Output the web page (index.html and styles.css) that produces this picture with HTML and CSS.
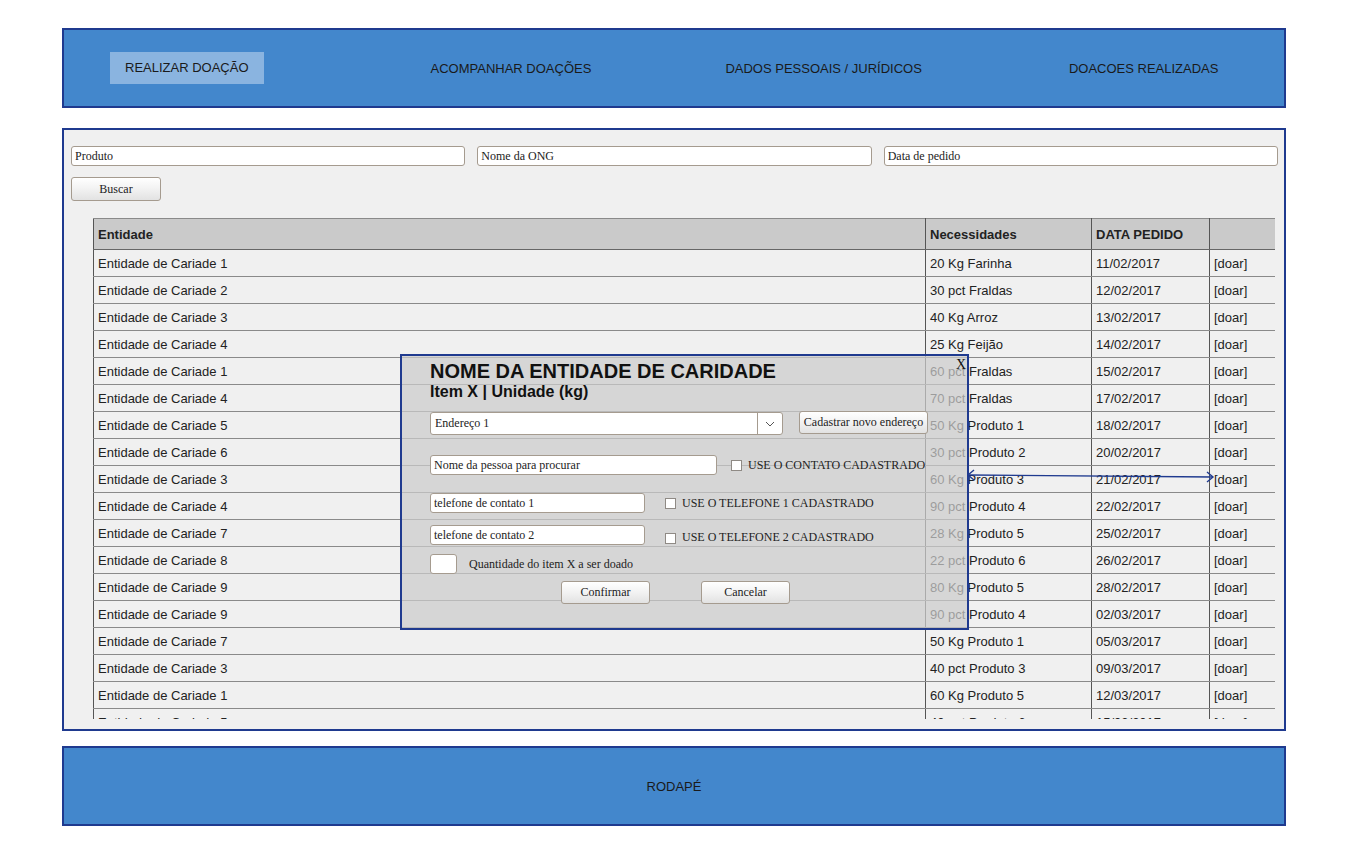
FILE: index.html
```html
<!DOCTYPE html>
<html lang="pt-BR">
<head>
<meta charset="utf-8">
<title>Realizar Doação</title>
<link rel="stylesheet" href="styles.css">
</head>
<body>
<header class="topbar">
  <nav class="nav">
    <a class="nav-item nav-active">REALIZAR DOAÇÃO</a>
    <a class="nav-item nav-2">ACOMPANHAR DOAÇÕES</a>
    <a class="nav-item nav-3">DADOS PESSOAIS / JURÍDICOS</a>
    <a class="nav-item nav-4">DOACOES REALIZADAS</a>
  </nav>
</header>

<main class="main">
  <div class="search">
    <input class="field" type="text" value="Produto">
    <input class="field" type="text" value="Nome da ONG">
    <input class="field" type="text" value="Data de pedido">
  </div>
  <button class="btn btn-buscar">Buscar</button>

  <div class="table-wrap">
    <table class="grid">
      <colgroup>
        <col class="c1"><col class="c2"><col class="c3"><col class="c4">
      </colgroup>
      <thead>
        <tr><th>Entidade</th><th>Necessidades</th><th>DATA PEDIDO</th><th></th></tr>
      </thead>
      <tbody>
        <tr><td>Entidade de Cariade 1</td><td>20 Kg Farinha</td><td>11/02/2017</td><td>[doar]</td></tr>
        <tr><td>Entidade de Cariade 2</td><td>30 pct Fraldas</td><td>12/02/2017</td><td>[doar]</td></tr>
        <tr><td>Entidade de Cariade 3</td><td>40 Kg Arroz</td><td>13/02/2017</td><td>[doar]</td></tr>
        <tr><td>Entidade de Cariade 4</td><td>25 Kg Feijão</td><td>14/02/2017</td><td>[doar]</td></tr>
        <tr><td>Entidade de Cariade 1</td><td>60 pct Fraldas</td><td>15/02/2017</td><td>[doar]</td></tr>
        <tr><td>Entidade de Cariade 4</td><td>70 pct Fraldas</td><td>17/02/2017</td><td>[doar]</td></tr>
        <tr><td>Entidade de Cariade 5</td><td>50 Kg Produto 1</td><td>18/02/2017</td><td>[doar]</td></tr>
        <tr><td>Entidade de Cariade 6</td><td>30 pct Produto 2</td><td>20/02/2017</td><td>[doar]</td></tr>
        <tr><td>Entidade de Cariade 3</td><td>60 Kg Produto 3</td><td>21/02/2017</td><td>[doar]</td></tr>
        <tr><td>Entidade de Cariade 4</td><td>90 pct Produto 4</td><td>22/02/2017</td><td>[doar]</td></tr>
        <tr><td>Entidade de Cariade 7</td><td>28 Kg Produto 5</td><td>25/02/2017</td><td>[doar]</td></tr>
        <tr><td>Entidade de Cariade 8</td><td>22 pct Produto 6</td><td>26/02/2017</td><td>[doar]</td></tr>
        <tr><td>Entidade de Cariade 9</td><td>80 Kg Produto 5</td><td>28/02/2017</td><td>[doar]</td></tr>
        <tr><td>Entidade de Cariade 9</td><td>90 pct Produto 4</td><td>02/03/2017</td><td>[doar]</td></tr>
        <tr><td>Entidade de Cariade 7</td><td>50 Kg Produto 1</td><td>05/03/2017</td><td>[doar]</td></tr>
        <tr><td>Entidade de Cariade 3</td><td>40 pct Produto 3</td><td>09/03/2017</td><td>[doar]</td></tr>
        <tr><td>Entidade de Cariade 1</td><td>60 Kg Produto 5</td><td>12/03/2017</td><td>[doar]</td></tr>
        <tr><td>Entidade de Cariade 5</td><td>40 pct Produto 6</td><td>15/03/2017</td><td>[doar]</td></tr>
      </tbody>
    </table>
  </div>

  <section class="modal">
    <span class="modal-close">X</span>
    <h1 class="modal-title">NOME DA ENTIDADE DE CARIDADE</h1>
    <h2 class="modal-sub">Item X | Unidade (kg)</h2>

    <div class="mrow row-address">
      <div class="select">
        <span class="select-text">Endereço 1</span>
        <span class="select-arrow">
          <svg width="10" height="6" viewBox="0 0 10 6"><path d="M1 1 L5 5 L9 1" fill="none" stroke="#555" stroke-width="1"/></svg>
        </span>
      </div>
      <button class="btn btn-new">Cadastrar novo endereço</button>
    </div>

    <div class="mrow row-contact">
      <input class="field f-contact" type="text" value="Nome da pessoa para procurar">
      <span class="check ck-contact"></span>
      <span class="mlabel">USE O CONTATO CADASTRADO</span>
    </div>

    <div class="mrow row-phone1">
      <input class="field f-phone" type="text" value="telefone de contato 1">
      <span class="check ck-phone"></span>
      <span class="mlabel">USE O TELEFONE 1 CADASTRADO</span>
    </div>

    <div class="mrow row-phone2">
      <input class="field f-phone" type="text" value="telefone de contato 2">
      <span class="check ck-phone"></span>
      <span class="mlabel">USE O TELEFONE 2 CADASTRADO</span>
    </div>

    <div class="mrow row-qty">
      <input class="field f-qty" type="text" value="">
      <span class="mlabel qty-label">Quantidade do item X a ser doado</span>
    </div>

    <div class="mrow row-buttons">
      <button class="btn btn-confirm">Confirmar</button>
      <button class="btn btn-cancel">Cancelar</button>
    </div>
  </section>

  <svg class="arrow" width="252" height="14" viewBox="0 0 252 14">
    <path d="M2 6 L247 8" fill="none" stroke="#1f3a8f" stroke-width="1.4"/>
    <path d="M8 1 L2 6 L8 11" fill="none" stroke="#1f3a8f" stroke-width="1.4"/>
    <path d="M241 3 L247 8 L241 13" fill="none" stroke="#1f3a8f" stroke-width="1.4"/>
  </svg>
</main>

<footer class="footer">RODAPÉ</footer>
</body>
</html>
```

FILE: styles.css
```css
* { box-sizing: border-box; }

html, body {
  margin: 0;
  padding: 0;
  background: #ffffff;
}

body {
  padding-top: 28px;
  font-family: "Liberation Sans", Arial, sans-serif;
  font-size: 13px;
  color: #222;
}

.topbar,
.main,
.footer {
  width: 1224px;
  margin-left: 62px;
  border: 2px solid #1f3a8f;
}

/* header */
.topbar {
  height: 80px;
  background: #4387cc;
  display: flex;
  align-items: center;
}

.nav {
  display: flex;
  align-items: center;
  padding-left: 46px;
}

.nav-item {
  display: block;
  padding: 9px 15px;
  font-size: 13px;
  line-height: 14px;
  color: #1a1a1a;
  text-decoration: none;
  white-space: nowrap;
}

.nav-active {
  background: #8ab4e0;
  height: 32px;
}

.nav-2 { margin-left: 152px; margin-top: 1px; }
.nav-3 { margin-left: 104px; margin-top: 1px; }
.nav-4 { margin-left: 117px; margin-top: 1px; }

/* main */
.main {
  position: relative;
  margin-top: 20px;
  height: 603px;
  background: #f0f0f0;
  padding: 16px 6px 10px 7px;
}

.search {
  display: grid;
  grid-template-columns: 1fr 1fr 1fr;
  column-gap: 12px;
}

.field {
  display: block;
  height: 20px;
  margin: 0;
  padding: 0 3px;
  border: 1px solid #a59b8f;
  border-radius: 3px;
  background: #fff;
  font-family: "Liberation Serif", "Times New Roman", serif;
  font-size: 12px;
  color: #222;
}

.btn {
  display: block;
  margin: 0;
  padding: 0;
  border: 1px solid #a59b8f;
  border-radius: 3px;
  background: linear-gradient(#ffffff, #f2f2f2 50%, #e2e2e2);
  font-family: "Liberation Serif", "Times New Roman", serif;
  font-size: 12px;
  color: #222;
}

.btn-buscar {
  margin-top: 11px;
  width: 90px;
  height: 24px;
}

.table-wrap {
  margin-top: 17px;
  margin-left: 22px;
  margin-right: 3px;
  height: 501px;
  overflow: hidden;
}

.grid {
  width: 100%;
  table-layout: fixed;
  border-collapse: collapse;
  font-size: 13px;
  color: #222;
}

.c1 { width: 832px; }
.c2 { width: 166px; }
.c3 { width: 118px; }
.c4 { width: 66px; }

.grid th,
.grid td {
  padding: 0 4px;
  text-align: left;
  border-left: 1px solid #555;
  border-right: 1px solid #555;
  border-top: 1px solid #8a8a8a;
  border-bottom: 1px solid #8a8a8a;
  white-space: nowrap;
  overflow: hidden;
}

.grid th {
  height: 31px;
  background: #cacaca;
  font-weight: bold;
  border-bottom: 1px solid #666;
}

.grid td {
  height: 27px;
}

/* modal */
.modal {
  position: absolute;
  left: 336px;
  top: 224px;
  width: 569px;
  height: 276px;
  border: 2px solid #1f3a8f;
  background: rgba(204, 204, 204, 0.72);
  padding: 4px 0 0 28px;
}

.modal-close {
  position: absolute;
  top: 2px;
  right: 1px;
  font-family: "Liberation Serif", "Times New Roman", serif;
  font-size: 14px;
  line-height: 14px;
  color: #111;
}

.modal-title {
  margin: 0;
  font-size: 20px;
  line-height: 23px;
  font-weight: bold;
  color: #111;
}

.modal-sub {
  margin: 0;
  font-size: 16px;
  line-height: 18px;
  font-weight: bold;
  color: #111;
}

.mrow {
  display: flex;
  align-items: center;
}

.row-address { margin-top: 11px; }

.select {
  display: flex;
  width: 353px;
  height: 23px;
  border: 1px solid #a59b8f;
  border-radius: 3px;
  background: #fff;
}

.select-text {
  flex: 1;
  padding-left: 4px;
  font-family: "Liberation Serif", "Times New Roman", serif;
  font-size: 12px;
  line-height: 21px;
  color: #222;
}

.select-arrow {
  width: 25px;
  border-left: 1px solid #a59b8f;
  display: flex;
  align-items: center;
  justify-content: center;
}

.btn-new {
  margin-left: 16px;
  width: 129px;
  height: 23px;
  position: relative;
  top: -1px;
}

.row-contact { margin-top: 20px; }
.f-contact { width: 287px; }

.check {
  display: block;
  width: 11px;
  height: 11px;
  border: 1px solid #8f8a85;
  background: #fff;
}

.ck-contact { margin-left: 14px; }
.ck-phone { margin-left: 20px; }

.mlabel {
  margin-left: 6px;
  font-family: "Liberation Serif", "Times New Roman", serif;
  font-size: 12px;
  line-height: 15px;
  color: #222;
}

.row-phone1 { margin-top: 18px; }
.f-phone { width: 215px; }

.row-phone2 {
  margin-top: 12px;
  align-items: flex-end;
}

.row-phone2 .ck-phone { margin-bottom: 1px; }

.row-qty { margin-top: 9px; }
.f-qty { width: 27px; }
.qty-label { margin-left: 12px; }

.row-buttons { margin-top: 7px; }

.btn-confirm {
  margin-left: 131px;
  width: 89px;
  height: 23px;
}

.btn-cancel {
  margin-left: 51px;
  width: 89px;
  height: 23px;
}

.arrow {
  position: absolute;
  left: 902px;
  top: 339px;
}

/* footer */
.footer {
  margin-top: 15px;
  height: 80px;
  background: #4387cc;
  display: flex;
  align-items: center;
  justify-content: center;
  font-size: 13px;
  color: #1a1a1a;
}
```
